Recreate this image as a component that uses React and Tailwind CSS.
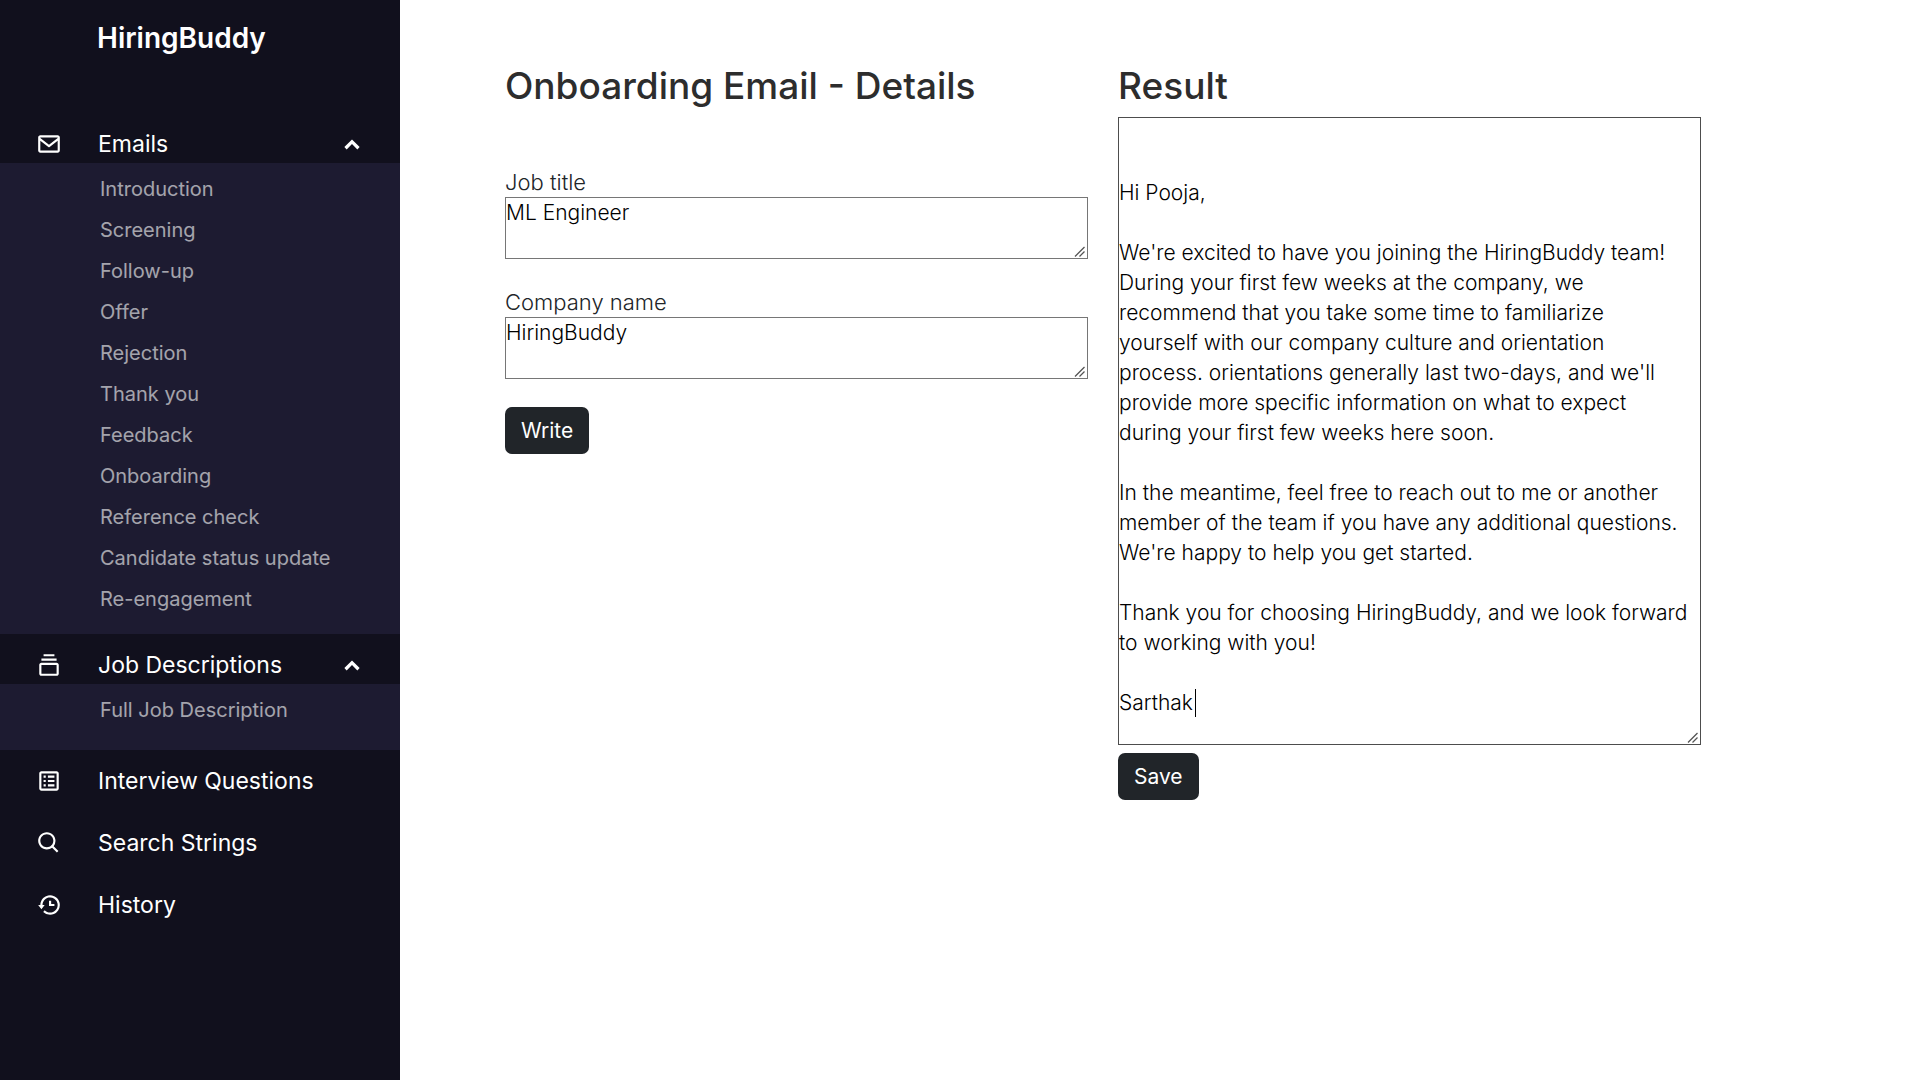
import { useState } from "react";
import {
  BiCollection,
  BiEnvelope,
  BiHistory,
  BiSearch,
  BiSolidChevronUp,
  BiSpreadsheet,
} from "react-icons/bi";

const NAV = [
  {
    label: "Emails",
    icon: BiEnvelope,
    items: [
      "Introduction",
      "Screening",
      "Follow-up",
      "Offer",
      "Rejection",
      "Thank you",
      "Feedback",
      "Onboarding",
      "Reference check",
      "Candidate status update",
      "Re-engagement",
    ],
  },
  { label: "Job Descriptions", icon: BiCollection, items: ["Full Job Description"] },
  { label: "Interview Questions", icon: BiSpreadsheet },
  { label: "Search Strings", icon: BiSearch },
  { label: "History", icon: BiHistory },
];

const EMAIL = `

Hi Pooja,

We're excited to have you joining the HiringBuddy team!
During your first few weeks at the company, we
recommend that you take some time to familiarize
yourself with our company culture and orientation
process. orientations generally last two-days, and we'll
provide more specific information on what to expect
during your first few weeks here soon.

In the meantime, feel free to reach out to me or another
member of the team if you have any additional questions.
We're happy to help you get started.

Thank you for choosing HiringBuddy, and we look forward
to working with you!

Sarthak`;

function NavGroup({ label, icon: Icon, items }) {
  const [open, setOpen] = useState(true);
  return (
    <li>
      <div className="flex h-[62px] items-center text-white">
        <a href="#" className="flex flex-1 items-center text-[23px]">
          <span className="flex w-[98px] shrink-0 justify-center">
            <Icon className="size-[26px]" aria-hidden="true" />
          </span>
          {label}
        </a>
        {items && (
          <button
            type="button"
            aria-label={`Toggle ${label}`}
            aria-expanded={open}
            onClick={() => setOpen(!open)}
            className="flex w-24 justify-center pt-0.5"
          >
            <BiSolidChevronUp className="size-[26px]" aria-hidden="true" />
          </button>
        )}
      </div>
      {items && open && (
        <ul className="-mt-3 min-h-[66px] bg-[#1d1b31] pt-1.5 pb-3.5 pl-[100px]">
          {items.map((item) => (
            <li key={item}>
              <a href="#" className="block text-[20px] leading-[41px] text-white opacity-60">
                {item}
              </a>
            </li>
          ))}
        </ul>
      )}
    </li>
  );
}

function Sidebar() {
  return (
    <aside className="w-[400px] shrink-0 bg-[#11101d]">
      <div className="flex h-[75px] items-center pl-[97px] text-[28px] font-semibold text-white">
        HiringBuddy
      </div>
      <nav className="mt-[38px]">
        <ul>
          {NAV.map((group) => (
            <NavGroup key={group.label} {...group} />
          ))}
        </ul>
      </nav>
    </aside>
  );
}

function TextArea({ className, children, ...props }) {
  return (
    <div className="relative">
      <textarea
        className={`block w-full border bg-white text-[21px] leading-[30px] font-light text-black ${className}`}
        {...props}
      />
      {/* Resize grip, drawn over the corner; pointer events pass to the textarea */}
      <svg
        viewBox="0 0 14 14"
        className="pointer-events-none absolute right-px bottom-px size-3.5 bg-white"
        fill="none"
        stroke="#555"
        strokeWidth="1.3"
        aria-hidden="true"
      >
        <path d="M2 12.5 11.5 3M6.5 12.5l5-5" />
      </svg>
      {children}
    </div>
  );
}

function Field({ id, label, value }) {
  return (
    <div className="mb-7">
      <label htmlFor={id} className="block text-[22px] leading-[30px] font-light">
        {label}
      </label>
      <TextArea id={id} rows={2} defaultValue={value} className="border-[#767676]" />
    </div>
  );
}

function DarkButton({ children }) {
  return (
    <button
      type="button"
      className="h-[47px] rounded-[7px] bg-[#212529] px-4 text-[21px] text-white"
    >
      {children}
    </button>
  );
}

export default function App() {
  return (
    <div className="flex min-h-screen bg-white font-['Inter',sans-serif] text-[#212529]">
      <Sidebar />
      <main className="grid flex-1 grid-cols-2 items-start gap-[30px] pt-[65px] pr-[219px] pl-[105px]">
        <section>
          <h1 className="mb-[60px] text-[37px] leading-[42px] font-medium text-[#2d2d2d]">
            Onboarding Email - Details
          </h1>
          <Field id="job-title" label="Job title" value="ML Engineer" />
          <Field id="company-name" label="Company name" value="HiringBuddy" />
          <DarkButton>Write</DarkButton>
        </section>
        <section>
          <h2 className="mb-[10px] text-[37px] leading-[42px] font-medium text-[#2d2d2d]">
            <label htmlFor="result">Result</label>
          </h2>
          <div className="mb-2">
            <TextArea id="result" defaultValue={EMAIL} className="h-[628px] border-[#4d4d4d]">
              <span className="absolute top-[572px] left-[77px] h-7 w-px bg-black" />
            </TextArea>
          </div>
          <DarkButton>Save</DarkButton>
        </section>
      </main>
    </div>
  );
}
